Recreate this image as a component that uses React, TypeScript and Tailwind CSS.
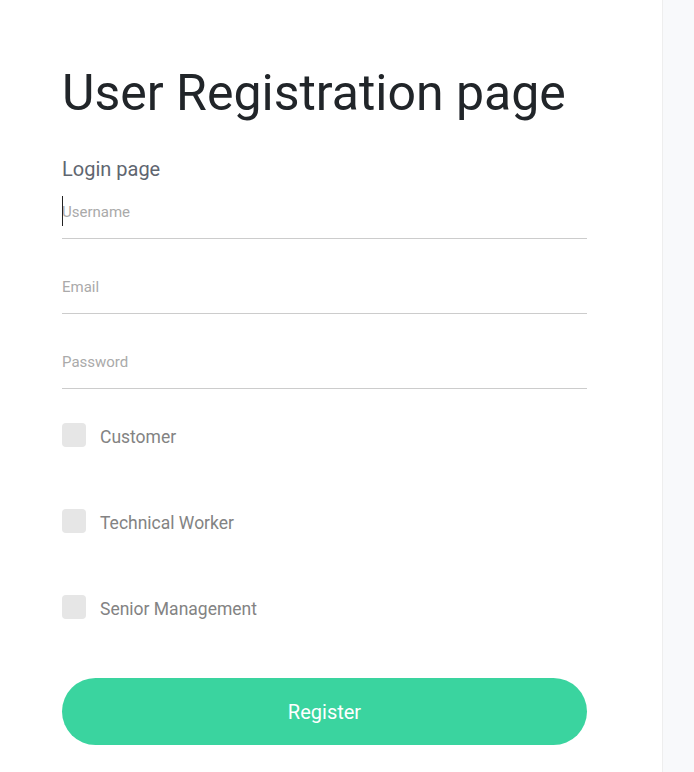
import React from "react";

export default function App() {
  const roles = ["Customer", "Technical Worker", "Senior Management"];
  return (
    <div className="flex min-h-[772px] w-full bg-white" style={{ fontFamily: "Roboto, 'Liberation Sans', sans-serif" }}>
      <div className="w-[662px] shrink-0 bg-white">
        <div className="ml-[62px] w-[525px] pt-[63px]">
          <h1 className="text-[50px] leading-[60px] font-normal text-[#212529]">User Registration page</h1>
          <h2 className="mt-[34px] text-[20px] leading-[24px] text-[#5f6670]">Login page</h2>
          <div className="mt-[13px] flex flex-col gap-[30px]">
            {["Username", "Email", "Password"].map((p, i) => (
              <div key={p} className="relative h-[30px] box-content border-b border-[#cccccc] pt-[3px] pb-[11px]">
                {i === 0 && <span className="absolute left-0 top-[2px] h-[30px] w-px bg-[#222]" />}
                <input
                  placeholder={p}
                  className="h-[30px] w-full bg-transparent text-[15px] text-[#333] outline-none placeholder:text-[#aaaaaa]"
                />
              </div>
            ))}
          </div>
          <div className="mt-[34px] flex flex-col gap-[62px]">
            {roles.map((r) => (
              <label key={r} className="flex items-center">
                <span className="h-[24px] w-[24px] rounded-[4px] bg-[#e6e6e6]" />
                <span className="relative top-[2px] ml-[14px] text-[17.5px] leading-[24px] text-[#838383]">{r}</span>
              </label>
            ))}
          </div>
          <button className="mt-[59px] flex h-[67px] w-[525px] items-center justify-center rounded-full bg-[#3ad49f] text-[20px] text-white">
            Register
          </button>
        </div>
      </div>
      <div className="flex-1 border-l border-[#eeeeee] bg-[#f8f9fb]" />
    </div>
  );
}
